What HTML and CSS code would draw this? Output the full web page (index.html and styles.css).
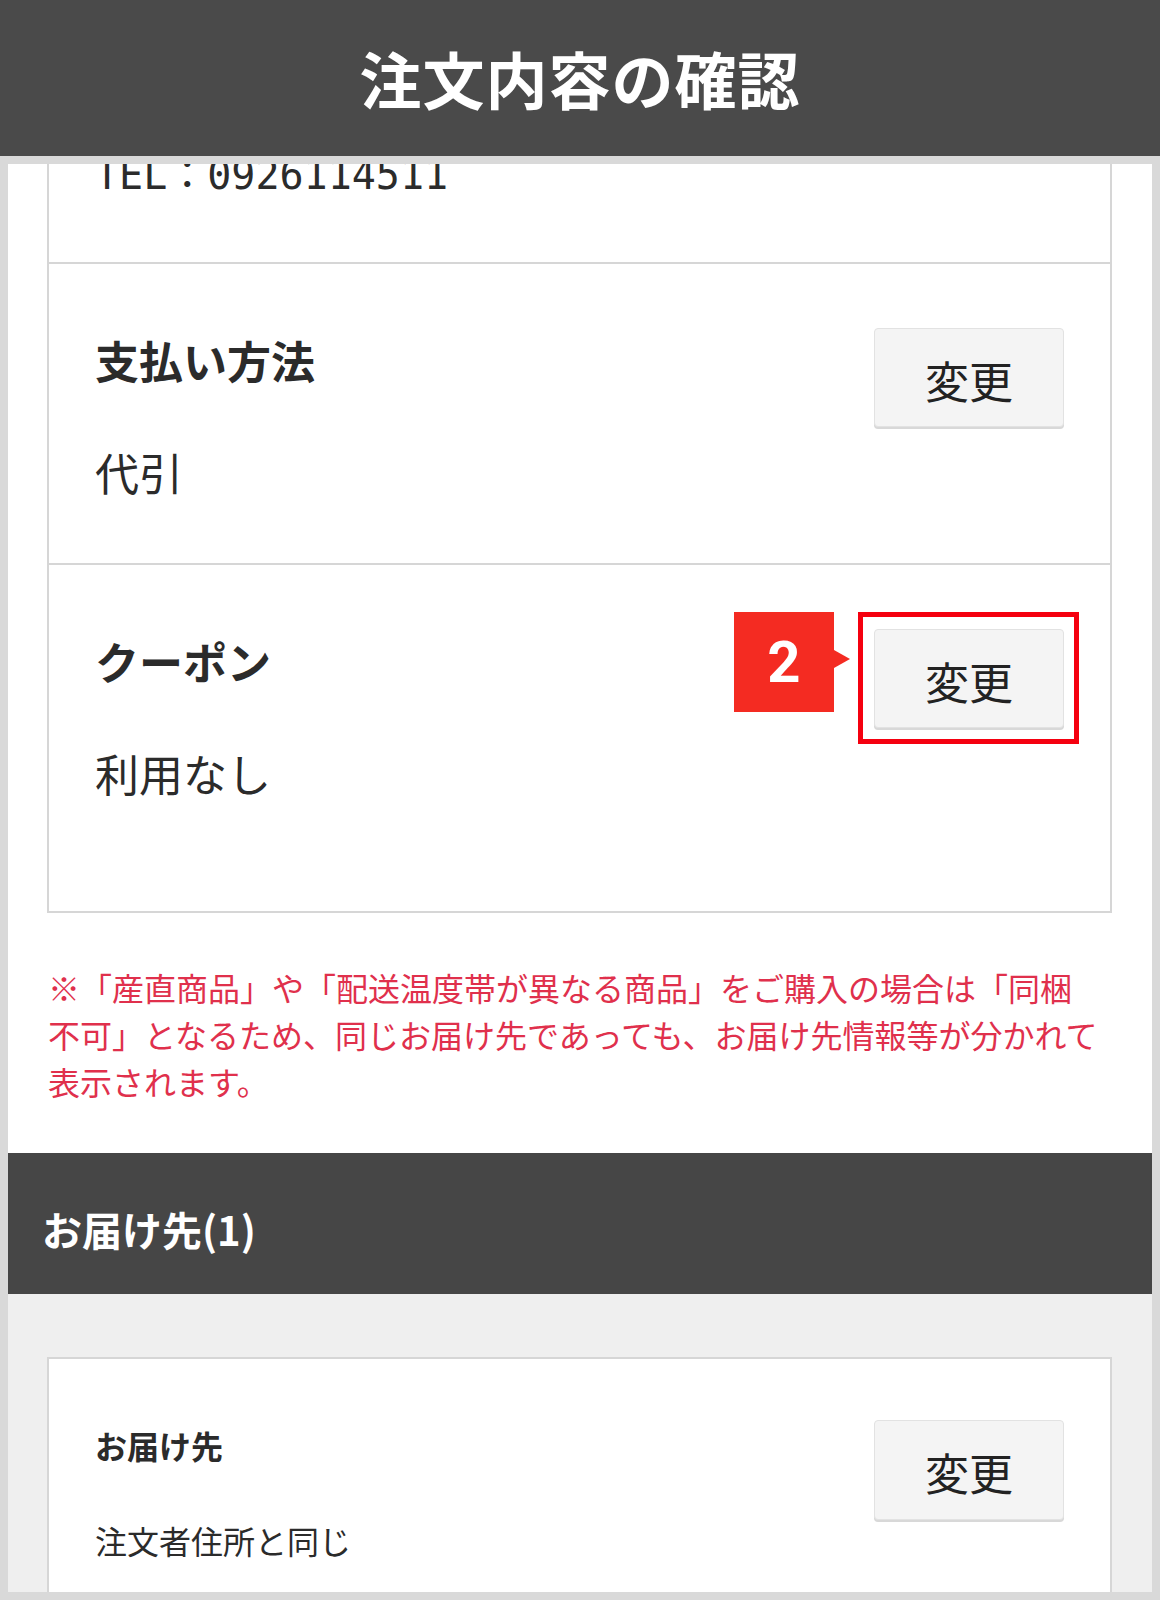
FILE: index.html
```html
<!DOCTYPE html>
<html lang="ja">
<head>
<meta charset="utf-8">
<title>注文内容の確認</title>
<link rel="stylesheet" href="styles.css">
</head>
<body>
<header class="app-header"><h1 class="app-title">注文内容の確認</h1></header>
<div class="frame">
  <div class="viewport">
    <div class="card card-summary">
      <div class="sec sec-tel"><p class="tel">TEL：0926114511</p></div>
      <div class="sec">
        <div class="sec-main">
          <h2 class="sec-title">支払い方法</h2>
          <p class="sec-value">代引</p>
        </div>
        <button class="btn">変更</button>
      </div>
      <div class="sec sec-last">
        <div class="sec-main">
          <h2 class="sec-title">クーポン</h2>
          <p class="sec-value">利用なし</p>
        </div>
        <button class="btn">変更</button>
        <span class="badge">2</span>
        <span class="highlight"></span>
      </div>
    </div>
    <p class="note">※「産直商品」や「配送温度帯が異なる商品」をご購入の場合は「同梱<br>不可」となるため、同じお届け先であっても、お届け先情報等が分かれて<br>表示されます。</p>
    <div class="ship-head">お届け先(1)</div>
    <div class="ship-body">
      <div class="card card-ship">
        <div class="ship-main">
          <h3 class="ship-label">お届け先</h3>
          <p class="ship-value">注文者住所と同じ</p>
        </div>
        <button class="btn btn-ship">変更</button>
      </div>
    </div>
  </div>
</div>
</body>
</html>
```

FILE: styles.css
```css
* { box-sizing: border-box; }
html, body { margin: 0; padding: 0; }
body {
  width: 1160px;
  height: 1600px;
  overflow: hidden;
  background: #d9d9d9;
  font-family: "Noto Sans CJK JP", "Noto Sans", sans-serif;
  color: #2b2b2b;
}
h1, h2, h3, p { margin: 0; }

.app-header {
  height: 156px;
  background: #4a4a4a;
  display: flex;
  align-items: center;
  justify-content: center;
}
.app-title {
  color: #fff;
  font-size: 62px;
  font-weight: 700;
  line-height: 1;
  letter-spacing: 1px;
}

.frame {
  height: 1444px;
  padding: 8px;
  background: #d9d9d9;
}
.viewport {
  height: 1428px;
  overflow: hidden;
  background: #fff;
}

.card {
  background: #fff;
  border: 2px solid #d6d6d6;
}
.card-summary {
  margin: -37px 40px 0 39px;
}

.sec {
  position: relative;
  display: flex;
  justify-content: space-between;
  align-items: flex-start;
  padding: 0 46px;
  border-top: 2px solid #d6d6d6;
}
.sec-tel {
  border-top: none;
  padding-top: 20px;
  padding-bottom: 61px;
}
.tel {
  font-family: "DejaVu Sans Mono", "Noto Sans CJK JP", monospace;
  font-size: 40px;
  line-height: 52px;
  color: #2b2b2b;
}
.sec-main {
  padding-top: 70px;
  padding-bottom: 65px;
}
.sec-last .sec-main { padding-bottom: 112px; }
.sec-title {
  font-size: 44px;
  line-height: 52px;
  font-weight: 700;
}
.sec-value {
  margin-top: 60px;
  font-size: 44px;
  line-height: 52px;
  font-weight: 400;
}

.btn {
  margin-top: 64px;
  width: 190px;
  height: 99px;
  padding: 0;
  background: #f4f4f4;
  border: 1px solid #e2e2e2;
  border-radius: 4px;
  box-shadow: 0 2px 0 #d8d8d8;
  font-family: "Noto Sans CJK JP", sans-serif;
  font-size: 44px;
  line-height: 1;
  color: #222;
  padding-top: 4px;
}

.badge {
  position: absolute;
  top: 47px;
  right: 276px;
  width: 100px;
  height: 100px;
  background: #f42b22;
  color: #fff;
  font-family: "Roboto", "Noto Sans", sans-serif;
  font-weight: 700;
  font-size: 58px;
  display: flex;
  align-items: center;
  justify-content: center;
}
.badge::after {
  content: "";
  position: absolute;
  left: 100%;
  top: 38px;
  border-left: 16px solid #f42b22;
  border-top: 9px solid transparent;
  border-bottom: 9px solid transparent;
}
.highlight {
  position: absolute;
  top: 47px;
  right: 31px;
  width: 221px;
  height: 132px;
  border: 5px solid #f5000f;
}

.note {
  margin: 51px 0 48px;
  padding: 0 40px;
  font-size: 32px;
  line-height: 47px;
  color: #e0304c;
}

.ship-head {
  height: 141px;
  background: #464646;
  color: #fff;
  font-size: 40px;
  font-weight: 700;
  display: flex;
  align-items: center;
  padding: 10px 0 0 34px;
}

.ship-body {
  background: #efefef;
  padding: 63px 40px 0 39px;
  height: 400px;
}
.card-ship {
  display: flex;
  justify-content: space-between;
  align-items: flex-start;
  padding: 0 46px;
  height: 400px;
}
.ship-main { padding-top: 64px; }
.ship-label {
  font-size: 32px;
  line-height: 44px;
  font-weight: 700;
}
.ship-value {
  margin-top: 51px;
  font-size: 32px;
  line-height: 44px;
}
.btn-ship {
  margin-top: 61px;
  height: 100px;
}
```
